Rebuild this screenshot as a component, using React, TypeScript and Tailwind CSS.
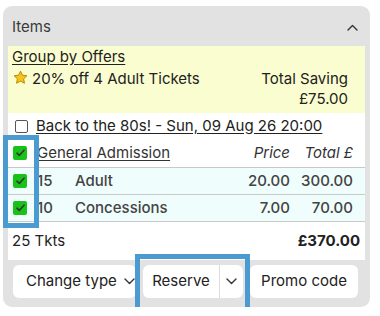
import React from "react";

const Chevron = ({ up = false }: { up?: boolean }) => (
  <svg width="11" height="7" viewBox="0 0 11 7" fill="none" className={up ? "rotate-180" : ""}>
    <path d="M1 1l4.5 4.5L10 1" stroke="#333" strokeWidth="1.4" strokeLinecap="round" strokeLinejoin="round" />
  </svg>
);

const GreenCheck = () => (
  <span className="flex h-[14px] w-[14px] items-center justify-center rounded-[2px] bg-[#19c219]">
    <svg width="9" height="8" viewBox="0 0 9 8" fill="none">
      <path d="M1 4.2l2.3 2.2L8 1.2" stroke="#2f3a2f" strokeWidth="1.6" strokeLinecap="round" strokeLinejoin="round" />
    </svg>
  </span>
);

const Star = () => (
  <svg width="15" height="15" viewBox="0 0 24 24">
    <path
      d="M12 1.8l3.1 6.5 7.1.9-5.2 4.9 1.3 7.1L12 17.8l-6.3 3.4 1.3-7.1-5.2-4.9 7.1-.9z"
      fill="#f7c21a"
      stroke="#b98a06"
      strokeWidth="1.6"
      strokeLinejoin="round"
    />
  </svg>
);

export default function App() {
  const rows = [
    { qty: 15, name: "Adult", price: "20.00", total: "300.00" },
    { qty: 10, name: "Concessions", price: "7.00", total: "70.00" },
  ];

  return (
    <div className="relative pl-[3px] pt-[6px] font-['Inter',sans-serif] text-[15px] text-[#222]">
      <div className="w-[367px] rounded-[9px] bg-[#e2e2e2] pb-[9px]">
        {/* header */}
        <div className="flex h-[40px] items-center justify-between pl-[9px] pr-[12px] pt-[2px] text-[#3a3a3a]">
          <span>Items</span>
          <Chevron up />
        </div>

        <div className="mx-[5px] bg-white">
          {/* offers */}
          <div className="h-[67px] bg-[#fafdcf] pl-[4px] pr-[17px]">
            <div className="h-[21px] pt-[1px] leading-[20px] underline underline-offset-2">Group by Offers</div>
            <div className="flex justify-between pt-[2px] leading-[20px]">
              <div className="flex items-start gap-[4px]">
                <span className="pl-[1px] pt-[1px]">
                  <Star />
                </span>
                <span>20% off 4 Adult Tickets</span>
              </div>
              <div className="text-right">
                <div>Total Saving</div>
                <div>£75.00</div>
              </div>
            </div>
          </div>

          {/* event */}
          <div className="flex h-[26px] items-center gap-[8px] pl-[7px]">
            <span className="h-[13px] w-[13px] rounded-[2px] border border-[#555] bg-white" />
            <span className="underline underline-offset-2">Back to the 80s! - Sun, 09 Aug 26 20:00</span>
          </div>

          {/* table */}
          <div className="grid grid-cols-[25px_42px_1fr_70px_75px] text-[#333]">
            <div className="flex h-[28px] items-center pl-[5px]">
              <GreenCheck />
            </div>
            <div className="col-span-2 flex h-[28px] items-center pl-[4px] underline underline-offset-2">
              General Admission
            </div>
            <div className="flex h-[28px] items-center justify-end italic">Price</div>
            <div className="flex h-[28px] items-center justify-end pr-[12px] italic">Total £</div>

            {rows.map((r) => (
              <React.Fragment key={r.name}>
                <div className="flex h-[27px] items-center border-t border-[#c9c9c9] bg-[#effdfd] pl-[5px]">
                  <GreenCheck />
                </div>
                <div className="flex h-[27px] items-center border-t border-[#c9c9c9] bg-[#effdfd] pl-[4px] font-medium text-[#444]">
                  {r.qty}
                </div>
                <div className="flex h-[27px] items-center border-t border-[#c9c9c9] bg-[#effdfd] font-medium text-[#444]">
                  {r.name}
                </div>
                <div className="flex h-[27px] items-center justify-end border-t border-[#c9c9c9] bg-[#effdfd] font-medium text-[#444]">
                  {r.price}
                </div>
                <div className="flex h-[27px] items-center justify-end border-t border-[#c9c9c9] bg-[#effdfd] pr-[12px] font-medium text-[#444]">
                  {r.total}
                </div>
              </React.Fragment>
            ))}
          </div>

          {/* totals */}
          <div className="flex h-[39px] items-center justify-between border-t border-[#c9c9c9] pl-[4px] pr-[5px]">
            <span>25 Tkts</span>
            <span className="font-bold">£370.00</span>
          </div>
        </div>

        {/* actions */}
        <div className="flex gap-[7px] pl-[10px] pt-[5px]">
          <button className="flex h-[33px] w-[123px] items-center gap-[7px] whitespace-nowrap rounded-[6px] bg-white pl-[13px]">
            Change type <Chevron />
          </button>
          <div className="flex h-[33px] w-[100px] items-stretch rounded-[6px] bg-white">
            <button className="w-[77px] whitespace-nowrap border-r border-[#dcdcdc] text-center">Reserve</button>
            <button className="flex flex-1 items-center justify-center">
              <Chevron />
            </button>
          </div>
          <button className="h-[33px] w-[108px] whitespace-nowrap rounded-[6px] bg-white text-center">Promo code</button>
        </div>
      </div>

      {/* highlight overlays */}
      <div className="absolute left-[3px] top-[135px] h-[93px] w-[36px] border-[5px] border-[#4b9ad0]" />
      <div className="absolute left-[135px] top-[254px] h-[60px] w-[115px] border-[5px] border-[#4b9ad0]" />
    </div>
  );
}
